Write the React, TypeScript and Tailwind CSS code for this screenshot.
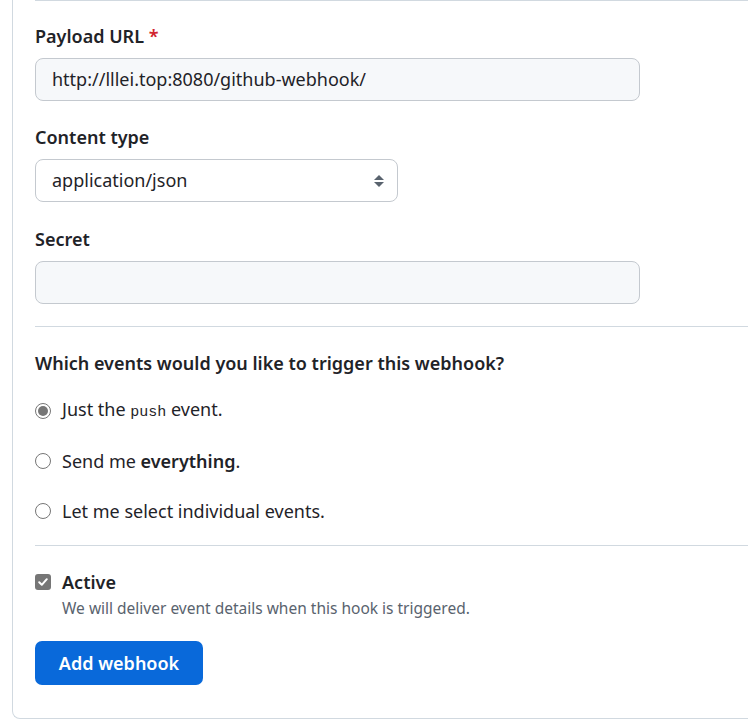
import React from "react";

function Radio({ checked }: { checked?: boolean }) {
  return (
    <span className="w-[16px] h-[16px] rounded-full border border-[#767676] bg-white flex items-center justify-center shrink-0">
      {checked && <span className="w-[10px] h-[10px] rounded-full bg-[#767676]" />}
    </span>
  );
}

function Checkbox() {
  return (
    <span className="w-[16px] h-[16px] rounded-[3px] bg-[#767676] flex items-center justify-center shrink-0">
      <svg width="12" height="12" viewBox="0 0 12 12" fill="none">
        <path d="M2.2 6.3 L4.8 8.8 L9.8 3.2" stroke="white" strokeWidth="2" strokeLinecap="round" strokeLinejoin="round" />
      </svg>
    </span>
  );
}

export default function App() {
  const font = { fontFamily: '"Noto Sans", "Open Sans", sans-serif' };
  return (
    <div className="w-[748px] h-[720px] bg-white overflow-hidden text-[#1f2328]" style={font}>
      <div className="ml-[12px] h-[719px] border-l border-b border-[#d1d9e0] rounded-bl-[8px] pl-[22px]">
        <div className="border-t border-[#d1d9e0]" />

        {/* Payload URL */}
        <div className="mt-[22px] text-[18px] font-semibold leading-[26px]">
          Payload URL <span className="text-[#d1242f]">*</span>
        </div>
        <div className="mt-[9px] w-[605px] h-[43px] rounded-[8px] border border-[#c4c9cf] bg-[#f6f8fa] pl-[16px] flex items-center text-[18px]">
          http://lllei.top:8080/github-webhook/
        </div>

        {/* Content type */}
        <div className="mt-[23px] text-[18px] font-semibold leading-[26px]">Content type</div>
        <div className="mt-[9px] w-[363px] h-[43px] rounded-[8px] border border-[#c4c9cf] bg-white pl-[16px] pr-[12px] flex items-center justify-between text-[18px]">
          <span>application/json</span>
          <svg width="12" height="16" viewBox="0 0 12 16">
            <path d="M6 2 L11 7 H1 Z" fill="#59636e" />
            <path d="M6 14 L11 9 H1 Z" fill="#59636e" />
          </svg>
        </div>

        {/* Secret */}
        <div className="mt-[24px] text-[18px] font-semibold leading-[26px]">Secret</div>
        <div className="mt-[9px] w-[605px] h-[43px] rounded-[8px] border border-[#c4c9cf] bg-[#f6f8fa]" />

        <div className="mt-[22px] border-t border-[#d1d9e0]" />

        {/* Events */}
        <div className="mt-[23px] text-[18px] font-semibold leading-[26px]">
          Which events would you like to trigger this webhook?
        </div>
        <div className="mt-[22px] flex flex-col gap-[24px] text-[18px]">
          <label className="h-[26px] flex items-center gap-[11px]">
            <Radio checked />
            <span className="leading-[26px]">
              Just the <code className="text-[15px]" style={{ fontFamily: '"Liberation Mono", monospace' }}>push</code> event.
            </span>
          </label>
          <label className="h-[26px] flex items-center gap-[11px]">
            <Radio />
            <span className="leading-[26px]">
              Send me <strong className="font-semibold">everything</strong>.
            </span>
          </label>
          <label className="h-[26px] flex items-center gap-[11px]">
            <Radio />
            <span className="leading-[26px]">Let me select individual events.</span>
          </label>
        </div>

        <div className="mt-[21px] border-t border-[#d1d9e0]" />

        {/* Active */}
        <div className="mt-[23px] flex items-center gap-[11px]">
          <Checkbox />
          <span className="text-[18px] font-semibold leading-[26px]">Active</span>
        </div>
        <div className="mt-[2px] pl-[27px] text-[15.5px] text-[#59636e] leading-[22px]">
          We will deliver event details when this hook is triggered.
        </div>

        <button className="mt-[22px] w-[168px] h-[44px] rounded-[7px] bg-[#0969da] text-white text-[18px] font-semibold flex items-center justify-center">
          Add webhook
        </button>
      </div>
    </div>
  );
}
